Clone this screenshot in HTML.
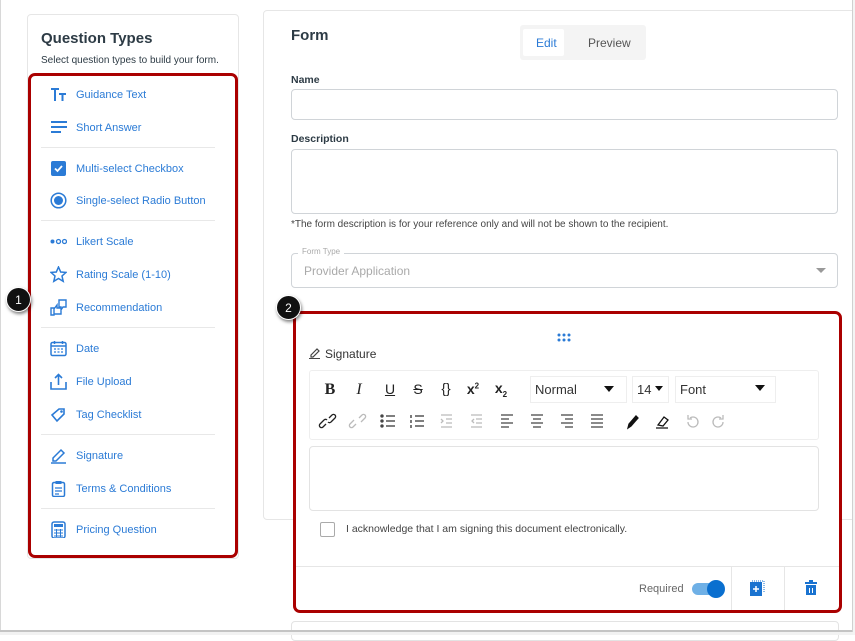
<!DOCTYPE html>
<html><head><meta charset="utf-8"><style>
*{margin:0;padding:0;box-sizing:border-box}
body{width:855px;height:635px;position:relative;background:#fff;font-family:"Liberation Sans",sans-serif;overflow:hidden;color:#2d3b45}
.a{position:absolute}
.it{position:absolute;left:76px;font-size:11px;color:#2b7bd6;line-height:14px}
.ic{position:absolute;left:50px;width:17px;height:17px}
.sep{position:absolute;left:41px;width:174px;height:1px;background:#e8e8e8}
.tb{position:absolute;font-size:14px;color:#222;text-align:center;width:20px}
.box{position:absolute;border:1px solid #d0d4d8;border-radius:4px;background:#fff}
.badge{position:absolute;width:25px;height:25px;border-radius:50%;background:#111;color:#fff;font-size:12px;text-align:center;line-height:25px;box-shadow:1px 2px 3px rgba(0,0,0,.5);border:1px solid #fff}
</style></head><body>

<!-- left card -->
<div class="a" style="left:27px;top:14px;width:212px;height:545px;border:1px solid #e6e6e6;border-radius:4px;background:#fff"></div>
<div class="a" style="left:41px;top:30px;font-size:15px;font-weight:bold;color:#2d3b45">Question Types</div>
<div class="a" style="left:41px;top:55px;font-size:10px;color:#2d3b45">Select question types to build your form.</div>
<div class="a" style="left:28px;top:73px;width:210px;height:485px;border:3px solid #a00;border-radius:7px"></div>

<svg class="ic" style="top:86px" viewBox="0 0 17 17"><path d="M1 3h8M5 3v12M9 8h7M12.5 8v7" stroke="#2b7bd6" stroke-width="2" fill="none"/></svg>
<div class="it" style="top:88px">Guidance Text</div>
<svg class="ic" style="top:119px" viewBox="0 0 17 17"><path d="M1 3h16M1 8h16M1 13h10" stroke="#2b7bd6" stroke-width="2"/></svg>
<div class="it" style="top:121px">Short Answer</div>
<div class="sep" style="top:147px"></div>
<svg class="ic" style="top:160px" viewBox="0 0 17 17"><rect x="1" y="1" width="15" height="15" rx="2" fill="#2b7bd6"/><path d="M5 8.5l2.5 2.5 4.5-5" stroke="#fff" stroke-width="1.8" fill="none"/></svg>
<div class="it" style="top:162px">Multi-select Checkbox</div>
<svg class="ic" style="top:192px" viewBox="0 0 17 17"><circle cx="8.5" cy="8.5" r="7.3" stroke="#2b7bd6" stroke-width="1.5" fill="none"/><circle cx="8.5" cy="8.5" r="4.5" fill="#2b7bd6"/></svg>
<div class="it" style="top:194px">Single-select Radio Button</div>
<div class="sep" style="top:220px"></div>
<svg class="ic" style="top:233px" viewBox="0 0 17 17"><circle cx="2.5" cy="8.5" r="2" fill="#2b7bd6"/><circle cx="8.5" cy="8.5" r="2" fill="none" stroke="#2b7bd6" stroke-width="1.3"/><circle cx="14.5" cy="8.5" r="2" fill="none" stroke="#2b7bd6" stroke-width="1.3"/></svg>
<div class="it" style="top:235px">Likert Scale</div>
<svg class="ic" style="top:266px" viewBox="0 0 17 17"><path d="M8.5 1l2.2 5 5.3.4-4 3.6 1.2 5.3-4.7-2.8-4.7 2.8 1.2-5.3-4-3.6 5.3-.4z" fill="none" stroke="#2b7bd6" stroke-width="1.5"/></svg>
<div class="it" style="top:268px">Rating Scale (1-10)</div>
<svg class="ic" style="top:299px" viewBox="0 0 17 17"><path d="M1 9h3v7H1zM4 10l3-4v3h4v6H4M9 1h7v7h-3l-2 3V8H9z" fill="none" stroke="#2b7bd6" stroke-width="1.4"/></svg>
<div class="it" style="top:301px">Recommendation</div>
<div class="sep" style="top:327px"></div>
<svg class="ic" style="top:340px" viewBox="0 0 17 17"><rect x="1" y="2.5" width="15" height="13" rx="1.5" fill="none" stroke="#2b7bd6" stroke-width="1.5"/><path d="M1 6h15M4.5 1v3M12.5 1v3" stroke="#2b7bd6" stroke-width="1.5"/><path d="M4 9h2M7.5 9h2M11 9h2M4 12h2M7.5 12h2M11 12h2" stroke="#2b7bd6" stroke-width="1.3"/></svg>
<div class="it" style="top:342px">Date</div>
<svg class="ic" style="top:373px" viewBox="0 0 17 17"><path d="M1 9v7h15V9M8.5 12V2M5 5l3.5-3.5L12 5" fill="none" stroke="#2b7bd6" stroke-width="1.6"/></svg>
<div class="it" style="top:375px">File Upload</div>
<svg class="ic" style="top:406px" viewBox="0 0 17 17"><path d="M2 9l7-6h5v5l-7 7z" fill="none" stroke="#2b7bd6" stroke-width="1.6"/><circle cx="11.5" cy="5.5" r="1.3" fill="#2b7bd6"/></svg>
<div class="it" style="top:408px">Tag Checklist</div>
<div class="sep" style="top:434px"></div>
<svg class="ic" style="top:447px" viewBox="0 0 17 17"><path d="M3 11l8-8 3 3-8 8H3z" fill="none" stroke="#2b7bd6" stroke-width="1.5"/><path d="M1 16h15" stroke="#2b7bd6" stroke-width="1.5"/></svg>
<div class="it" style="top:449px">Signature</div>
<svg class="ic" style="top:480px" viewBox="0 0 17 17"><rect x="2.5" y="2.5" width="12" height="14" rx="1.5" fill="none" stroke="#2b7bd6" stroke-width="1.5"/><rect x="5.5" y="1" width="6" height="3" fill="#2b7bd6"/><path d="M5 8h7M5 11h7M5 14h4" stroke="#2b7bd6" stroke-width="1.3"/></svg>
<div class="it" style="top:482px">Terms &amp; Conditions</div>
<div class="sep" style="top:508px"></div>
<svg class="ic" style="top:521px" viewBox="0 0 17 17"><rect x="2" y="1" width="13" height="16" rx="2" fill="none" stroke="#2b7bd6" stroke-width="1.5"/><rect x="4" y="3" width="9" height="3" fill="#2b7bd6"/><path d="M4 9h9M4 12h9M4 15h9M6.5 8v8M10.5 8v8" stroke="#2b7bd6" stroke-width="1"/></svg>
<div class="it" style="top:523px">Pricing Question</div>

<div class="badge" style="left:6px;top:287px">1</div>

<!-- right card -->
<div class="a" style="left:263px;top:10px;width:600px;height:510px;border:1px solid #e6e6e6;border-radius:4px;background:#fff"></div>
<div class="a" style="left:291px;top:27px;font-size:15px;font-weight:bold;color:#2d3b45">Form</div>
<div class="a" style="left:520px;top:25px;width:126px;height:35px;background:#f4f4f4;border-radius:3px"></div>
<div class="a" style="left:523px;top:29px;width:41px;height:27px;background:#fff;border-radius:2px"></div>
<div class="a" style="left:536px;top:36px;font-size:12px;color:#2b7bd6">Edit</div>
<div class="a" style="left:588px;top:36px;font-size:12px;color:#555">Preview</div>
<div class="a" style="left:291px;top:74px;font-size:10.5px;font-weight:bold">Name</div>
<div class="box" style="left:291px;top:89px;width:547px;height:31px"></div>
<div class="a" style="left:291px;top:133px;font-size:10.5px;font-weight:bold">Description</div>
<div class="box" style="left:291px;top:149px;width:547px;height:65px"></div>
<div class="a" style="left:291px;top:219px;font-size:10px;color:#444">*The form description is for your reference only and will not be shown to the recipient.</div>
<div class="box" style="left:291px;top:253px;width:547px;height:35px"></div>
<div class="a" style="left:298px;top:247px;padding:0 4px;background:#fff;font-size:8px;color:#aaa">Form Type</div>
<div class="a" style="left:304px;top:264px;font-size:12px;color:#aaa">Provider Application</div>
<div class="a" style="left:816px;top:268px;border-left:5px solid transparent;border-right:5px solid transparent;border-top:5px solid #999"></div>

<!-- signature block -->
<div class="a" style="left:291px;top:621px;width:548px;height:20px;border:1px solid #e3e3e3;border-radius:4px"></div>
<div class="a" style="left:293px;top:311px;width:549px;height:302px;border:3px solid #a00;border-radius:7px;background:#fff"></div>
<svg class="a" style="left:557px;top:333px" width="14" height="9"><g fill="#2b7bd6"><circle cx="2" cy="2" r="1.5"/><circle cx="7" cy="2" r="1.5"/><circle cx="12" cy="2" r="1.5"/><circle cx="2" cy="7" r="1.5"/><circle cx="7" cy="7" r="1.5"/><circle cx="12" cy="7" r="1.5"/></g></svg>
<svg class="a" style="left:309px;top:347px" width="12" height="12" viewBox="0 0 12 12"><path d="M2 8l6-6 2 2-6 6H2z" fill="none" stroke="#444" stroke-width="1.2"/><path d="M0 11.5h11" stroke="#444"/></svg>
<div class="a" style="left:325px;top:347px;font-size:12px;color:#333">Signature</div>
<div class="a" style="left:309px;top:370px;width:510px;height:70px;border:1px solid #eee;border-radius:3px"></div>
<div class="tb" style="left:320px;top:381px;font-family:'Liberation Serif',serif;font-weight:bold;font-size:16px">B</div>
<div class="tb" style="left:349px;top:381px;font-family:'Liberation Serif',serif;font-style:italic;font-size:16px">I</div>
<div class="tb" style="left:380px;top:381px;text-decoration:underline;font-size:14px">U</div>
<div class="tb" style="left:408px;top:381px;text-decoration:line-through;font-size:14px">S</div>
<div class="tb" style="left:436px;top:380px;font-size:14px">{}</div>
<div class="tb" style="left:463px;top:381px;font-weight:bold;font-size:14px">x<sup style="font-size:8px">2</sup></div>
<div class="tb" style="left:491px;top:380px;font-weight:bold;font-size:14px">x<sub style="font-size:8px">2</sub></div>
<div class="a" style="left:530px;top:376px;width:97px;height:27px;border:1px solid #eee"></div>
<div class="a" style="left:535px;top:382px;font-size:13px;color:#333">Normal</div>
<div class="a" style="left:604px;top:386px;border-left:5px solid transparent;border-right:5px solid transparent;border-top:6px solid #111"></div>
<div class="a" style="left:632px;top:376px;width:37px;height:27px;border:1px solid #eee"></div>
<div class="a" style="left:637px;top:382px;font-size:13px;color:#333">14</div>
<div class="a" style="left:655px;top:386px;border-left:4px solid transparent;border-right:4px solid transparent;border-top:5px solid #111"></div>
<div class="a" style="left:675px;top:376px;width:101px;height:27px;border:1px solid #eee"></div>
<div class="a" style="left:680px;top:382px;font-size:13px;color:#333">Font</div>
<div class="a" style="left:755px;top:385px;border-left:5px solid transparent;border-right:5px solid transparent;border-top:6px solid #111"></div>
<svg class="a" style="left:318px;top:412px" width="420" height="18" viewBox="0 0 420 18">
<g fill="none" stroke-width="1.3">
<path d="M6 11l-3 3a2 2 0 0 1-3-3l4-4a2 2 0 0 1 3 0M9 5l3-3a2 2 0 0 1 3 3l-4 4a2 2 0 0 1-3 0" stroke="#222" transform="translate(2,1)"/>
<path d="M6 11l-3 3a2 2 0 0 1-3-3l4-4M9 5l3-3a2 2 0 0 1 3 3l-4 4" stroke="#bbb" transform="translate(32,1)"/>
<g stroke="#333"><path d="M68 4h9M68 9h9M68 14h9"/><circle cx="64" cy="4" r="1"/><circle cx="64" cy="9" r="1"/><circle cx="64" cy="14" r="1"/></g>
<g stroke="#333"><path d="M97 4h9M97 9h9M97 14h9M93 3v3M93 8v3M93 13v3"/></g>
<g stroke="#bbb"><path d="M123 3h11M128 7h6M128 11h6M123 15h11M123 7l2 2-2 2"/></g>
<g stroke="#bbb"><path d="M153 3h11M158 7h6M158 11h6M153 15h11M156 7l-2 2 2 2"/></g>
<g stroke="#444"><path d="M183 3h12M183 7h8M183 11h12M183 15h8"/></g>
<g stroke="#444"><path d="M213 3h12M215 7h8M213 11h12M215 15h8"/></g>
<g stroke="#444"><path d="M243 3h12M247 7h8M243 11h12M247 15h8"/></g>
<g stroke="#444"><path d="M273 3h12M273 7h12M273 11h12M273 15h12"/></g>
<path d="M310 16l1-4 7-8 2 2-7 8z" stroke="#111" fill="#111"/>
<path d="M340 13l6-8 4 3-5 6zM338 16h12" stroke="#111"/>
<path d="M372 6a5 5 0 1 1-2 4M370 3v4h4" stroke="#bbb"/>
<path d="M403 6a5 5 0 1 0 2 4M405 3v4h-4" stroke="#bbb"/>
</g></svg>
<div class="box" style="left:309px;top:446px;width:510px;height:65px;border-color:#e3e3e3"></div>
<div class="a" style="left:320px;top:522px;width:15px;height:15px;border:1.5px solid #aaa;border-radius:2px"></div>
<div class="a" style="left:346px;top:523px;font-size:10.5px;color:#444">I acknowledge that I am signing this document electronically.</div>
<div class="a" style="left:296px;top:566px;width:543px;height:1px;background:#e6e6e6"></div>
<div class="a" style="left:731px;top:567px;width:1px;height:43px;background:#e6e6e6"></div>
<div class="a" style="left:784px;top:567px;width:1px;height:43px;background:#e6e6e6"></div>
<div class="a" style="left:639px;top:583px;font-size:11px;color:#666">Required</div>
<div class="a" style="left:692px;top:583px;width:30px;height:12px;border-radius:6px;background:#6fb0e6"></div>
<div class="a" style="left:707px;top:580px;width:18px;height:18px;border-radius:50%;background:#0a6fcf"></div>
<svg class="a" style="left:749px;top:580px" width="16" height="17" viewBox="0 0 16 17"><rect x="1" y="2" width="12" height="14" fill="#1a73d0"/><path d="M4 9h6M7 6v6" stroke="#fff" stroke-width="1.5"/><path d="M3 1h12v12" stroke="#1a73d0" stroke-dasharray="1 1" fill="none"/></svg>
<svg class="a" style="left:805px;top:580px" width="12" height="16" viewBox="0 0 12 16"><rect x="0" y="2" width="12" height="2" fill="#1a73d0"/><rect x="4" y="0" width="4" height="2" fill="#1a73d0"/><rect x="1" y="5" width="10" height="10" fill="#1a73d0"/><path d="M4.5 8v5M7.5 8v5" stroke="#fff"/></svg>

<div class="badge" style="left:276px;top:295px">2</div>

<!-- frame (on top) -->
<div class="a" style="left:0;top:0;width:1px;height:635px;background:#d8d8d8"></div>
<div class="a" style="left:0;top:632px;width:855px;height:3px;background:#f2f2f2"></div>
<div class="a" style="left:0;top:630px;width:855px;height:2px;background:#c4c4c4"></div>
<div class="a" style="left:852px;top:0;width:1px;height:632px;background:#d0d0d0"></div>
<div class="a" style="left:853px;top:0;width:2px;height:635px;background:#f4f4f4"></div>
</body></html>
